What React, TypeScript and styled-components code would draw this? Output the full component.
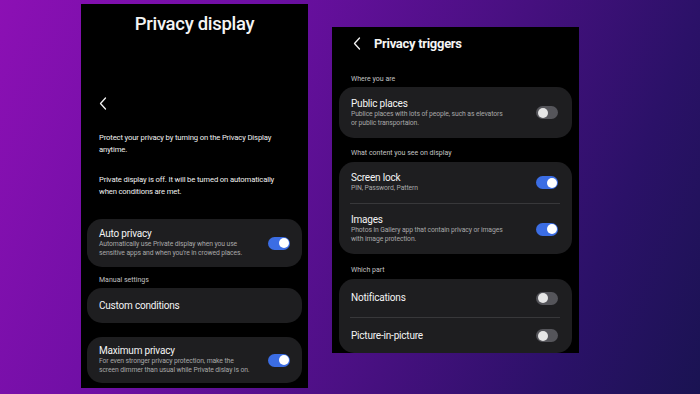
import React from "react";
import styled, {createGlobalStyle} from "styled-components";

const GlobalStyle = createGlobalStyle`
  html, body {
    margin: 0;
    padding: 0;
  }
  body {
    font-family: Roboto, "Noto Sans", "Liberation Sans", sans-serif;
    color: #f2f2f2;
  }
`

type ToggleProps = { on?: boolean }

const Toggle: React.FC<ToggleProps> = ({on}) => {
    return <Track $on={on}><Knob $on={on}/></Track>
};

const Chevron: React.FC = () => (
    <svg width="8" height="13" viewBox="0 0 8 13">
        <polyline points="6.5,1 1.5,6.5 6.5,12" fill="none" stroke="#f2f2f2" strokeWidth="1.3"
                  strokeLinecap="round" strokeLinejoin="round"/>
    </svg>
);

type ItemProps = {
    title: string
    desc?: string
    on?: boolean
    height: number
    titleTop?: number
}

const Item: React.FC<ItemProps> = ({title, desc, on, height, titleTop}) => (
    <Row style={{height}}>
        <RowText $top={titleTop}>
            <RowTitle>{title}</RowTitle>
            {desc && <RowDesc>{desc}</RowDesc>}
        </RowText>
        {on !== undefined && <Toggle on={on}/>}
    </Row>
);

export default function App() {
    return <Stage>
        <GlobalStyle/>
        <LeftPanel>
            <BigTitle>Privacy display</BigTitle>
            <BackLeft><Chevron/></BackLeft>
            <Para $mt={22}>Protect your privacy by turning on the Privacy Display<br/>anytime.</Para>
            <Para $mt={18}>Private display is off. It will be turned on automatically<br/>when conditions are met.</Para>
            <Card $mt={21} $pad={12}>
                <Item title="Auto privacy" height={48}
                      desc={"Automatically use Private display when you use\nsensitive apps and when you're in crowed places."}
                      on/>
            </Card>
            <Label $mt={8} $pl={12}>Manual settings</Label>
            <Card $mt={3} $pad={12}>
                <Item title="Custom conditions" height={35}/>
            </Card>
            <Card $mt={14} $pad={12}>
                <Item title="Maximum privacy" height={46}
                      desc={"For even stronger privacy protection, make the\nscreen dimmer than usual while Private dislay is on."}
                      on/>
            </Card>
        </LeftPanel>

        <RightPanel>
            <Header>
                <Chevron/>
                <HeaderTitle>Privacy triggers</HeaderTitle>
            </Header>
            <Label $mt={21} $pl={12}>Where you are</Label>
            <Card $mt={3} $pad={12} $padRight={14}>
                <Item title="Public places" height={51} titleTop={1}
                      desc={"Publice places with lots of people, such as elevators\nor public transportaion."}
                      on={false}/>
            </Card>
            <Label $mt={10} $pl={12}>What content you see on display</Label>
            <Card $mt={4} $pad={12} $padRight={14}>
                <Item title="Screen lock" height={41} desc="PIN, Password, Pattern" on/>
                <Divider/>
                <Item title="Images" height={50}
                      desc={"Photos in Gallery app that contain privacy or images\nwith image protection."}
                      on/>
            </Card>
            <Label $mt={11} $pl={12}>Which part</Label>
            <Card $mt={4} $pad={12} $padRight={14}>
                <Item title="Notifications" height={38} on={false}/>
                <Divider/>
                <Item title="Picture-in-picture" height={35} on={false}/>
            </Card>
        </RightPanel>
    </Stage>
}

const Stage = styled.div`
  width: 700px;
  height: 394px;
  overflow: hidden;
  display: flex;
  align-items: flex-start;
  background: linear-gradient(112deg, #8c10b4 0%, #6e0fa4 30%, #46107f 62%, #2b1168 82%, #1a1352 100%);
`

const LeftPanel = styled.div`
  width: 227px;
  height: 384px;
  margin: 4px 0 0 81px;
  padding: 0 6px;
  box-sizing: border-box;
  background: #000;
  display: flex;
  flex-direction: column;
  overflow: hidden;
`

const RightPanel = styled.div`
  width: 247px;
  height: 326px;
  margin: 27px 0 0 24px;
  padding: 0 7px;
  box-sizing: border-box;
  background: #000;
  display: flex;
  flex-direction: column;
  overflow: hidden;
`

const BigTitle = styled.div`
  margin-top: 8px;
  height: 24px;
  line-height: 24px;
  text-align: center;
  font-size: 18.5px;
  font-weight: 500;
  letter-spacing: -0.3px;
  color: #f4f4f4;
`

const BackLeft = styled.div`
  margin: 61px 0 0 12px;
  height: 13px;
  display: flex;
`

const Para = styled.p<{ $mt: number }>`
  margin: ${p => p.$mt}px 0 0;
  padding-left: 12px;
  font-size: 7.7px;
  line-height: 12px;
  letter-spacing: -0.15px;
  color: #f0f0f0;
`

const Label = styled.div<{ $mt: number, $pl: number }>`
  margin-top: ${p => p.$mt}px;
  padding-left: ${p => p.$pl}px;
  height: 10px;
  line-height: 10px;
  font-size: 7px;
  color: #c2c2c2;
`

const Card = styled.div<{ $mt: number, $pad: number, $padRight?: number }>`
  margin-top: ${p => p.$mt}px;
  padding: 0 ${p => p.$padRight ?? p.$pad}px 0 ${p => p.$pad}px;
  background: #1e1e20;
  border-radius: 15px;
  flex-shrink: 0;
`

const Row = styled.div`
  display: flex;
  align-items: center;
  justify-content: space-between;
  box-sizing: border-box;
`

const RowText = styled.div<{ $top?: number }>`
  display: flex;
  flex-direction: column;
  margin-top: ${p => p.$top ?? 0}px;
`

const RowTitle = styled.div`
  font-size: 10px;
  line-height: 12px;
  letter-spacing: -0.2px;
  color: #f4f4f4;
`

const RowDesc = styled.div`
  font-size: 6.8px;
  line-height: 9px;
  letter-spacing: -0.1px;
  color: #a8a8a8;
  white-space: pre-line;
`

const Divider = styled.div`
  height: 1px;
  background: #38383a;
  margin: 0 -2px 0 -1px;
`

const Header = styled.div`
  margin: 6px 0 0 14px;
  height: 20px;
  display: flex;
  align-items: center;
  gap: 13px;
`

const HeaderTitle = styled.div`
  font-size: 13px;
  font-weight: 700;
  letter-spacing: -0.3px;
  color: #f4f4f4;
`

const Track = styled.div<{ $on?: boolean }>`
  width: 22px;
  height: 13px;
  border-radius: 7px;
  background: ${p => p.$on ? "#3b6de4" : "#55555a"};
  display: flex;
  align-items: center;
  justify-content: ${p => p.$on ? "flex-end" : "flex-start"};
  padding: 0 1.5px;
  box-sizing: border-box;
  flex-shrink: 0;
`

const Knob = styled.div<{ $on?: boolean }>`
  width: 10px;
  height: 10px;
  border-radius: 50%;
  background: ${p => p.$on ? "#ffffff" : "#e6e6e6"};
`
